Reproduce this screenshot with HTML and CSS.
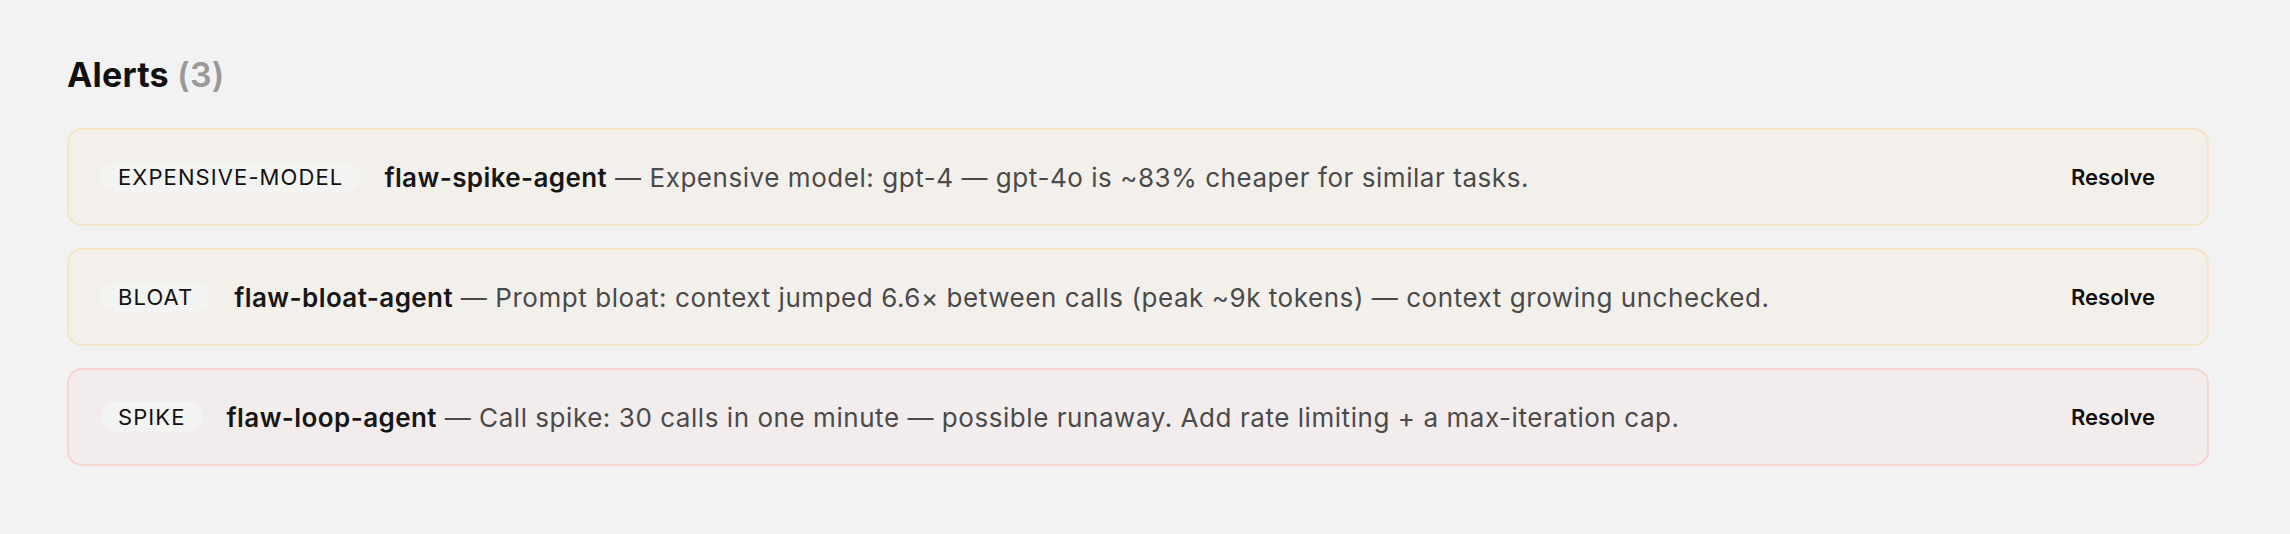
FILE: index.html
```html
<!DOCTYPE html>
<html lang="en">
<head>
    <meta charset="UTF-8">
    <meta name="viewport" content="width=device-width, initial-scale=1.0">
    <title>Alerts</title>
    <link rel="stylesheet" href="styles.css">
</head>
<body>

<div class="alerts-panel">
    <h2 class="alerts-title">Alerts <span class="count">(3)</span></h2>

    <div class="alert-list">
        <!-- cost alert -->
        <div class="alert warn">
            <span class="tag">EXPENSIVE-MODEL</span>
            <p class="message"><span class="agent">flaw-spike-agent</span> — Expensive model: gpt-4 — gpt-4o is ~83% cheaper for similar tasks.</p>
            <button type="button" class="resolve">Resolve</button>
        </div>

        <!-- context size alert -->
        <div class="alert warn">
            <span class="tag">BLOAT</span>
            <p class="message"><span class="agent">flaw-bloat-agent</span> — Prompt bloat: context jumped 6.6× between calls (peak ~9k tokens) — context growing unchecked.</p>
            <button type="button" class="resolve">Resolve</button>
        </div>

        <!-- call rate alert -->
        <div class="alert danger">
            <span class="tag">SPIKE</span>
            <p class="message"><span class="agent">flaw-loop-agent</span> — Call spike: 30 calls in one minute — possible runaway. Add rate limiting + a max-iteration cap.</p>
            <button type="button" class="resolve">Resolve</button>
        </div>
    </div>
</div>

</body>
</html>
```

FILE: styles.css
```css
body {
    font-family: Inter, "Noto Sans", Arial, sans-serif;
    margin: 0;
    padding: 0;
    background: #f2f2f2;
    color: #111;
}
.alerts-panel {
    padding: 55px 81px 40px 67px;
}
.alerts-title {
    margin: 0 0 33px 0;
    font-size: 34px;
    line-height: 40px;
    font-weight: 700;
    letter-spacing: 0.2px;
    color: #111;
}
.alerts-title .count {
    color: #999;
    font-weight: 600;
}
.alert-list {
    display: flex;
    flex-direction: column;
    gap: 22px;
}
.alert {
    display: flex;
    align-items: center;
    gap: 24px;
    height: 98px;
    box-sizing: border-box;
    padding: 0 32px;
    border-radius: 15px;
    border: 2px solid #f5e4c6;
    background: #f3f0eb;
}
.alert.danger {
    border-color: #f5d6d1;
    background: #f3ecec;
}
.alert .tag {
    flex: none;
    padding: 0 17px;
    height: 30px;
    line-height: 30px;
    border-radius: 15px;
    background: #f3f3f2;
    font-size: 22px;
    letter-spacing: 1.1px;
    color: #111;
}
.alert .message {
    flex: 1;
    margin: 0;
    font-size: 26px;
    letter-spacing: 0.55px;
    color: #4a4a4a;
    white-space: nowrap;
}
.alert .agent {
    color: #161616;
    font-weight: 600;
    letter-spacing: 0.4px;
}
.alert .resolve {
    flex: none;
    padding: 8px 20px;
    background: none;
    border: none;
    font-family: inherit;
    font-size: 22px;
    font-weight: 600;
    color: #111;
    cursor: pointer;
}
```
